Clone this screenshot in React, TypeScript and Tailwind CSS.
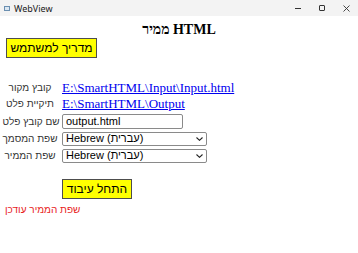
import React from "react";

const sans = { fontFamily: '"Liberation Sans", Arial, sans-serif' };
const serif = { fontFamily: '"Liberation Serif", "Times New Roman", serif' };

export default function App() {
  return (
    <div className="w-[358px] h-[253px] bg-white overflow-hidden flex flex-col" style={sans}>
      {/* title bar */}
      <div className="h-[16px] bg-[#f3f3f3] flex items-center shrink-0">
        <div className="ml-[4px] w-[6px] h-[5px] border border-[#6b8fb0] bg-[#dbe7f2]" />
        <span className="ml-[4px] text-[9px] text-[#1a1a1a] leading-none" style={{ fontFamily: '"Noto Sans", "Liberation Sans", sans-serif' }}>WebView</span>
        <div className="ml-auto flex items-center h-full">
          <div className="w-[24px] flex justify-center">
            <div className="w-[6px] h-[1px] bg-[#333]" />
          </div>
          <div className="w-[24px] flex justify-center">
            <div className="w-[6px] h-[6px] border border-[#333] rounded-[1px]" />
          </div>
          <div className="w-[24px] flex justify-center">
            <svg width="7" height="7" viewBox="0 0 7 7">
              <path d="M0.5 0.5 L6.5 6.5 M6.5 0.5 L0.5 6.5" stroke="#333" strokeWidth="0.9" />
            </svg>
          </div>
        </div>
      </div>

      {/* heading */}
      <div className="mt-[6px] text-center text-[14px] font-bold leading-[16px] text-black" style={serif}>
        ממיר HTML
      </div>

      {/* guide button */}
      <div className="mt-0 pl-[6px]">
        <button className="w-[91px] h-[20px] bg-[#ffff00] border border-[#4d4d4d] text-[12px] leading-none text-black flex items-center justify-center" style={sans}>
          מדריך למשתמש
        </button>
      </div>

      {/* form rows */}
      <div className="mt-[21px] flex flex-col">
        <div className="flex items-center h-[16px]">
          <div className="w-[58px] pl-[2px] text-center text-[10px] text-[#333]">קובץ מקור</div>
          <a className="ml-[4px] text-[13px] leading-none text-[#0000ee] underline" style={serif}>E:\SmartHTML\Input\Input.html</a>
        </div>
        <div className="flex items-center h-[16px]">
          <div className="w-[58px] pl-[2px] text-center text-[10px] text-[#333]">תיקיית פלט</div>
          <a className="ml-[4px] text-[13px] leading-none text-[#0000ee] underline" style={serif}>E:\SmartHTML\Output</a>
        </div>
        <div className="flex items-center h-[18px] mt-[1px]">
          <div className="w-[60px] pl-[2px] text-center text-[10px] text-[#333]">שם קובץ פלט</div>
          <div className="ml-[2px] w-[121px] h-[15px] border border-[#8a8a8a] rounded-[2px] flex items-center pl-[3px] text-[11px] text-black">output.html</div>
        </div>
        <div className="flex items-center h-[17px]">
          <div className="w-[58px] pl-[2px] text-center text-[10px] text-[#333]">שפת המסמך</div>
          <div className="ml-[4px] w-[145px] h-[14px] border border-[#8a8a8a] rounded-[2px] flex items-center pl-[3px] pr-[3px] text-[11px] text-black">
            <span>Hebrew (עברית)</span>
            <svg className="ml-auto" width="7" height="4" viewBox="0 0 7 4"><path d="M0.5 0.5 L3.5 3.3 L6.5 0.5" fill="none" stroke="#222" strokeWidth="1.1" /></svg>
          </div>
        </div>
        <div className="flex items-center h-[17px]">
          <div className="w-[58px] pl-[2px] text-center text-[10px] text-[#333]">שפת הממיר</div>
          <div className="ml-[4px] w-[145px] h-[14px] border border-[#8a8a8a] rounded-[2px] flex items-center pl-[3px] pr-[3px] text-[11px] text-black">
            <span>Hebrew (עברית)</span>
            <svg className="ml-auto" width="7" height="4" viewBox="0 0 7 4"><path d="M0.5 0.5 L3.5 3.3 L6.5 0.5" fill="none" stroke="#222" strokeWidth="1.1" /></svg>
          </div>
        </div>
      </div>

      {/* process button */}
      <div className="mt-[15px] pl-[62px]">
        <button className="w-[70px] h-[20px] bg-[#ffff00] border border-[#4d4d4d] text-[12px] leading-none text-black flex items-center justify-center" style={sans}>
          התחל עיבוד
        </button>
      </div>

      <div className="mt-[4px] pl-[5px] text-[10px] text-[#e81c1c] leading-[14px]" style={sans}>
        שפת הממיר עודכן
      </div>
    </div>
  );
}
